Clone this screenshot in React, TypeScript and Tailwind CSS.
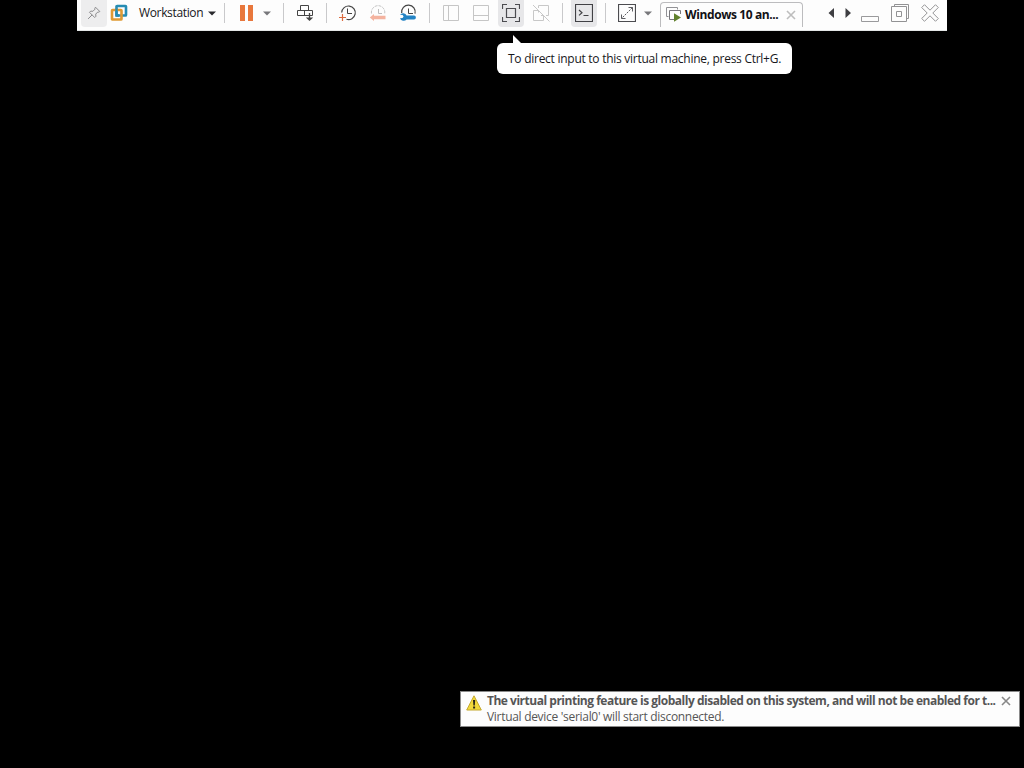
import type { ReactNode } from 'react';

interface IconProps {
  className?: string;
  children: ReactNode;
}

// All toolbar glyphs share an 18x18 grid
const Icon = ({ className = '', children }: IconProps) => (
  <svg className={`block shrink-0 ${className}`} width="18" height="18" viewBox="0 0 18 18" fill="none">
    {children}
  </svg>
);

const Separator = ({ className = '' }: { className?: string }) => (
  <div className={`h-5 w-px shrink-0 bg-[#c9c9cb] ${className}`} />
);

const Caret = ({ className = 'text-[#77777b]' }: { className?: string }) => (
  <svg className={`block shrink-0 ${className}`} width="8" height="5" viewBox="0 0 8 5">
    <path d="M0 0.5h8L4 4.5z" fill="currentColor" />
  </svg>
);

const PinIcon = () => (
  <Icon>
    <path
      d="M10.5 3.2l4.3 4.3-1.1.7-.8-.3-2.2 2.2.2 2.2-1.2 1.2-5.2-5.2 1.2-1.2 2.2.2 2.2-2.2-.3-.8zM7.1 10.9l-4 4"
      stroke="#8a8a8c"
    />
  </Icon>
);

const WorkstationLogo = () => (
  <Icon>
    <rect x="6.5" y="2" width="9.500" height="9.500" rx=".6" stroke="#268cb3" strokeWidth="2.6" />
    <rect x="2" y="6" width="9.500" height="9.500" rx=".6" stroke="#df9a34" strokeWidth="2.6" />
    <path d="M6.500 4.500v7H9" stroke="#268cb3" strokeWidth="2.4" />
  </Icon>
);

const SendKeysIcon = () => (
  <Icon>
    <path d="M4.500 1.500h8v5h-8zM1.500 6.500h15v5h-15zM8.500 6.500v5" stroke="#444" />
    <path d="M13.500 9v5" stroke="#444" strokeWidth="1.3" />
    <path d="M9.800 13.500h7.400L13.500 17z" fill="#444" />
  </Icon>
);

const SnapshotIcon = () => (
  <Icon>
    <path d="M2.700 8.500a6.800 6.800 0 1 1 4.800 6.800" stroke="#444" strokeWidth="1.2" />
    <path d="M8.500 4.500v5H13" stroke="#444" />
    <path d="M3.500 10v7M0 13.500h7" stroke="#dc6b3f" strokeWidth="1.2" />
  </Icon>
);

const RevertIcon = () => (
  <Icon>
    <path d="M2.500 9.500a6.700 6.700 0 1 1 13.200 0" stroke="#c5c5c5" strokeDasharray="3 1" />
    <path d="M9.500 5v4.500H13" stroke="#bcbcbc" />
    <path d="M.8 13.500l4.200-3.500v1.800h11.500v3.400H5V17z" fill="#f4b39f" />
  </Icon>
);

const SnapshotManagerIcon = () => (
  <Icon>
    <path d="M2.700 9A6.800 6.800 0 1 1 16 9.700" stroke="#444" strokeWidth="1.2" />
    <path d="M9.500 4.500v5H14" stroke="#444" />
    <path
      d="M1 10.800l2.600.1 1 1.600-1 1.500-2.600.2A3.800 3.800 0 0 0 7.600 15.400H15a1.900 1.900 0 0 0 0-3.800H7.600A3.800 3.800 0 0 0 1 10.800z"
      fill="#2383c4"
    />
  </Icon>
);

const LibraryIcon = () => (
  <Icon>
    <path d="M1.500 1.500h15v15h-15zM6.500 1.500v15" stroke="#c6c6c6" />
  </Icon>
);

const ThumbnailIcon = () => (
  <Icon>
    <path d="M1.500 1.500h15v15h-15zM1.500 11.500h15" stroke="#c6c6c6" />
  </Icon>
);

const FullScreenIcon = () => (
  <Icon>
    <path d="M.5 5V.5H5M13 .5h4.500V5M17.500 13v4.500H13M5 17.500H.5V13M4.500 4.500h9v9h-9z" stroke="#4c4c50" strokeWidth="1.2" />
  </Icon>
);

const UnityIcon = () => (
  <Icon>
    <path d="M6.500 4V1.500h10v10H14M6.500 6.500h-5v10h10v-5M6.500 6.500v2M9 11.500h2.500M1 1l16.500 16.500" stroke="#c8c8c8" />
  </Icon>
);

const ConsoleIcon = () => (
  <Icon>
    <path d="M.5 .5h17v17H.5z" stroke="#414145" strokeWidth="1.2" />
    <path d="M4 6l3 2.700-3 2.700M8.500 11.500h5" stroke="#414145" strokeWidth="1.2" />
  </Icon>
);

const StretchIcon = () => (
  <Icon>
    <path d="M.5 .5h17v17H.5z" stroke="#4c4c50" strokeWidth="1.2" />
    <path d="M10.500 3.500h4v4M7.500 14.500h-4v-4" stroke="#5c5c60" />
    <path d="M14.500 3.500l-11 11" stroke="#5c5c60" strokeDasharray="2 1" />
  </Icon>
);

const MachineIcon = () => (
  <svg className="block shrink-0" width="16" height="16" viewBox="0 0 16 16" fill="none">
    <path d="M2.500 9.500h-2v-9h11v2" stroke="#929296" />
    <path d="M14.500 7V3.500h-11v9H8" stroke="#77777b" />
    <path d="M8 6.200l7 4.300-7 4.300z" fill="#60812c" />
  </svg>
);

const Cross = ({ className, size }: { className: string; size: number }) => (
  <svg className={`block shrink-0 ${className}`} width={size} height={size} viewBox="0 0 10 10" fill="none">
    <path d="M1 1l8 8M9 1L1 9" stroke="currentColor" strokeWidth="1.6" />
  </svg>
);

const WindowControls = () => (
  <>
    <svg className="ml-[25px] block shrink-0" width="23" height="10" viewBox="0 0 23 10" fill="#3e3e42">
      <path d="M6 0v10L0.500 5zM17.500 0v10l5.500-5z" />
    </svg>
    <Icon className="ml-[10px]">
      <path d="M.5 12.500h17v5H.5z" stroke="#9a9a9c" />
    </Icon>
    <Icon className="ml-3">
      <path d="M3.500 2.500v-2h14v14h-2M.5 2.500h15v15H.5zM5.500 7.500h5v5h-5z" stroke="#929294" />
    </Icon>
    <Icon className="ml-3">
      <path
        d="M3.500 .7L9 6.200 14.500.7l2.800 2.800L11.800 9l5.500 5.500-2.800 2.800L9 11.800l-5.500 5.500L.7 14.500 6.200 9 .7 3.500z"
        stroke="#949496"
      />
    </Icon>
  </>
);

const Toolbar = () => (
  <div className="ml-[77px] flex h-[31px] w-[870px] items-start border-b border-[#e3e6e6] bg-[#fdfdfd]">
    <div className="flex h-[26px] w-full items-center pl-1">
      <div className="flex h-[27px] w-[26px] shrink-0 justify-center self-start rounded-b bg-[#ededee] pt-1">
        <PinIcon />
      </div>
      <div className="ml-[3px]">
        <WorkstationLogo />
      </div>
      <span className="ml-[11px] w-[69px] shrink-0 whitespace-nowrap text-xs tracking-[-0.35px] text-[#17171b]">
        Workstation
      </span>
      <Caret className="text-[#29292d]" />
      <Separator className="ml-2" />

      <div className="ml-[15px] flex gap-[3px]">
        <div className="h-4 w-[5px] bg-[#e8773c]" />
        <div className="h-4 w-[5px] bg-[#e8773c]" />
      </div>
      <div className="ml-[10px]">
        <Caret />
      </div>
      <Separator className="ml-3" />
      <div className="ml-3">
        <SendKeysIcon />
      </div>
      <Separator className="ml-3" />
      <div className="ml-3 flex gap-3">
        <SnapshotIcon />
        <RevertIcon />
        <SnapshotManagerIcon />
      </div>
      <Separator className="ml-3" />
      <div className="ml-3 flex gap-3">
        <LibraryIcon />
        <ThumbnailIcon />
      </div>
      <div className="ml-2 flex h-[27px] w-[26px] shrink-0 justify-center self-start rounded-b bg-[#e7e7e9] pt-1">
        <FullScreenIcon />
      </div>
      <div className="ml-2">
        <UnityIcon />
      </div>
      <Separator className="ml-3" />
      <div className="ml-2 flex h-[27px] w-[26px] shrink-0 justify-center self-start rounded-b bg-[#e7e7e9] pt-1">
        <ConsoleIcon />
      </div>
      <Separator className="ml-2" />
      <div className="ml-3">
        <StretchIcon />
      </div>
      <div className="ml-2">
        <Caret />
      </div>

      <div className="ml-2 mt-0.5 flex h-[25px] w-[143px] shrink-0 items-center self-start rounded-t border border-b-0 border-[#bcbcbe] pl-[5px]">
        <MachineIcon />
        <span className="ml-[3px] w-[101px] shrink-0 whitespace-nowrap text-xs font-bold tracking-[-0.4px] text-[#111115]">
          Windows 10 an...
        </span>
        <Cross className="text-[#bdbdbd]" size={10} />
      </div>

      <WindowControls />
    </div>
  </div>
);

const InputHint = () => (
  <div className="relative ml-[497px] mt-3 flex h-[31px] w-[295px] items-center rounded-md bg-white pl-[11px]">
    <svg className="absolute -top-2 left-4" width="8" height="8" viewBox="0 0 8 8">
      <path d="M0 0l8 8H0z" fill="white" />
    </svg>
    <span className="whitespace-nowrap text-xs tracking-[-0.265px] text-[#17171b]">
      To direct input to this virtual machine, press Ctrl+G.
    </span>
  </div>
);

const WarningIcon = () => (
  <svg className="block shrink-0" width="16" height="16" viewBox="0 0 16 16">
    <path d="M8 .8l7.300 14.200H.7z" fill="#f2d93b" stroke="#c4a82c" strokeLinejoin="round" />
    <path d="M7 5h2.200l-.4 5.500H7.400zM7.100 11.600h2v2h-2z" fill="#29261a" />
  </svg>
);

const Notification = () => (
  <div className="mb-[41px] ml-[460px] mt-auto flex h-[36px] w-[560px] items-start border border-[#8a8a8a] bg-[#fdfdfd] pl-[5px] text-xs leading-4 text-[#555]">
    <div className="mt-[3px]">
      <WarningIcon />
    </div>
    <div className="ml-[5px] mt-px w-[514px] shrink-0 whitespace-nowrap">
      <p className="font-bold tracking-[-0.485px]">
        The virtual printing feature is globally disabled on this system, and will not be enabled for t...
      </p>
      <p className="tracking-[-0.3px]">Virtual device 'serial0' will start disconnected.</p>
    </div>
    <Cross className="mt-1 text-[#888]" size={10} />
  </div>
);

export default function App() {
  return (
    <div className="flex h-screen w-screen flex-col overflow-hidden bg-black font-['Open_Sans','Noto_Sans',sans-serif]">
      <Toolbar />
      <InputHint />
      <Notification />
    </div>
  );
}
